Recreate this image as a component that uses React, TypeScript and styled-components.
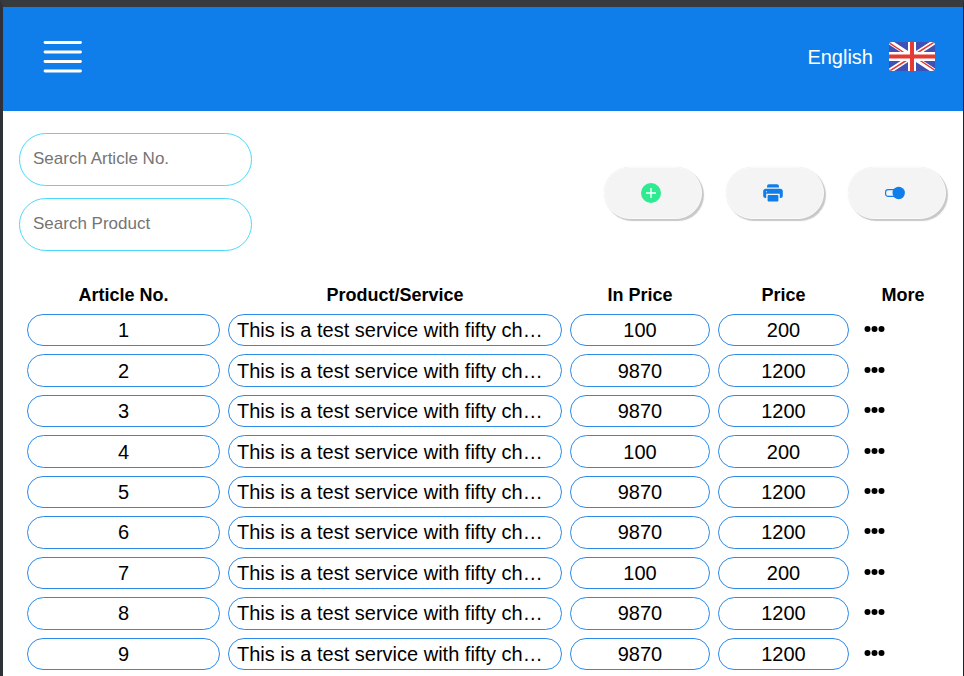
import React, { useState } from "react";
import styled, { createGlobalStyle } from "styled-components";

const GlobalStyle = createGlobalStyle`
  * { box-sizing: border-box; }
  body {
    margin: 0;
    background: #fff;
    font-family: "Liberation Sans", Arial, sans-serif;
    color: #000;
  }
`;

const Page = styled.div`
  min-height: 100vh;
  border: solid #373b3e;
  border-width: 7px 1px 0 3px;
  border-right-color: #1c2227;
  border-left-color: #2e3238;
`;

const Header = styled.header`
  display: flex;
  align-items: center;
  justify-content: space-between;
  height: 104px;
  padding: 0 27px 4px 40px;
  background: #107eea;
`;

const PlainButton = styled.button`
  display: flex;
  align-items: center;
  padding: 0;
  border: 0;
  background: none;
  color: inherit;
  font: inherit;
  cursor: pointer;
`;

const Language = styled(PlainButton)`
  gap: 15px;
  color: #fff;
  font-size: 20px;
`;

const Toolbar = styled.section`
  display: flex;
  align-items: center;
  justify-content: space-between;
  padding: 22px 17px 0 16px;
`;

const Filters = styled.div`
  display: grid;
  gap: 12px;
`;

const SearchInput = styled.input`
  width: 233px;
  height: 53px;
  padding: 0 14px 2px 13px;
  border: 1px solid #4dd8fb;
  border-radius: 27px;
  outline: 0;
  background: #fff;
  font: 17px "Liberation Sans", Arial, sans-serif;
  &::placeholder { color: #757575; }
`;

const Actions = styled.div`
  display: flex;
  gap: 24px;
  padding-top: 2px;
`;

const ActionButton = styled.button`
  display: flex;
  align-items: center;
  justify-content: center;
  width: 98px;
  height: 52px;
  padding: 0 4px 0 0;
  border: 1px solid #fafafa;
  border-radius: 26px;
  background: #f4f4f4;
  box-shadow: 2px 2px 1px #c8c8c8, 0 0 1px #ddd;
  cursor: pointer;
`;

const TableArea = styled.main`
  padding: 25px 6px 0 16px;
`;

const Table = styled.table`
  width: 100%;
  height: 402px;
  table-layout: fixed;
  border-collapse: separate;
  border-spacing: 8px;
`;

const Column = styled.col<{ $width?: number }>`
  width: ${({ $width }) => ($width ? `${$width}px` : "auto")};
`;

const HeadCell = styled.th`
  height: 22px;
  padding: 0;
  font-size: 18px;
  line-height: 22px;
`;

const Cell = styled.td<{ $align?: string }>`
  padding: 0 8px;
  border: 1px solid #2b8aea;
  border-radius: 17px;
  font-size: 20px;
  line-height: 24px;
  text-align: ${({ $align }) => $align ?? "center"};
  white-space: nowrap;
`;

const MoreCell = styled.td`
  padding: 0 7px 2px;
`;

const PRODUCT_LIMIT = 36;

const shorten = (text: string) =>
  text.length > PRODUCT_LIMIT ? `${text.slice(0, PRODUCT_LIMIT)}…` : text;

const rows = Array.from({ length: 9 }, (_, i) => ({
  article: i + 1,
  product: "This is a test service with fifty characters in it",
  inPrice: i % 3 === 0 ? 100 : 9870,
  price: i % 3 === 0 ? 200 : 1200,
}));

const MenuIcon = () => (
  <svg width="40" height="34" viewBox="0 0 40 34" stroke="#fff" strokeWidth="2.8" strokeLinecap="round" aria-hidden="true">
    <path d="M2 2.500H37.500M2 12H37.500M2 21.500H37.500M2 31H37.500" />
  </svg>
);

const FlagIcon = () => (
  <svg width="48" height="32" viewBox="0 0 48 32" aria-hidden="true">
    <defs>
      <clipPath id="flag"><rect x="1" y="1" width="46" height="29" rx="3" /></clipPath>
    </defs>
    <g clipPath="url(#flag)">
      <path fill="#3f51b5" d="M0 0H48V32H0z" />
      <path stroke="#fff" strokeWidth="5" d="M0 0L48 31M48 0L0 31" />
      <path stroke="#e53935" strokeWidth="1.500" d="M0 1L18 13M29 12L48 0M30 18L48 30M19 19L0 31" />
      <path fill="#fff" d="M20 0H28V32H20zM0 11H48V20H0z" />
      <path fill="#e53935" d="M22 0H26V32H22zM0 13.500H48V17.500H0z" />
    </g>
  </svg>
);

const AddIcon = () => (
  <svg width="20" height="20" viewBox="0 0 20 20" aria-hidden="true">
    <circle cx="10" cy="10" r="10" fill="#2eea91" />
    <path d="M10 5V15M5 10H15" stroke="#fff" strokeWidth="1.300" />
  </svg>
);

const PrintIcon = () => (
  <svg width="20" height="20" viewBox="0 0 20 20" fill="#107eea" aria-hidden="true">
    <path d="M4 4.500V3.500Q4 1.200 6 1.200H14Q16 1.200 16 3.500V4.500z" />
    <path fillRule="evenodd" d="M3 5.800H17Q19.800 5.800 19.800 8.500V13Q19.800 15 17.500 15H16.800V10.800H3.200V15H2.500Q.200 15 .200 13V8.500Q.200 5.800 3 5.800zM3 8.200V9.200H4V8.200z" />
    <rect x="4.600" y="12" width="10.800" height="6.500" rx="1" />
  </svg>
);

const ToggleIcon = () => (
  <svg width="20" height="20" viewBox="0 0 20 20" aria-hidden="true">
    <rect x=".6" y="6.600" width="13" height="6.800" rx="2.500" fill="none" stroke="#107eea" strokeWidth="1.200" />
    <circle cx="13.700" cy="10" r="6.200" fill="#107eea" />
  </svg>
);

const DotsIcon = () => (
  <svg width="21" height="8" viewBox="0 0 21 8" aria-hidden="true">
    <circle cx="3.500" cy="4" r="3" />
    <circle cx="10.500" cy="4" r="3" />
    <circle cx="17.500" cy="4" r="3" />
  </svg>
);

export default function App() {
  const [article, setArticle] = useState("");
  const [product, setProduct] = useState("");
  const visible = rows.filter(
    (row) =>
      String(row.article).includes(article) &&
      row.product.toLowerCase().includes(product.toLowerCase())
  );

  return (
    <>
      <GlobalStyle />
      <Page>
        <Header>
          <PlainButton aria-label="Menu"><MenuIcon /></PlainButton>
          <Language>English<FlagIcon /></Language>
        </Header>
        <Toolbar>
          <Filters>
            <SearchInput aria-label="Search Article No." placeholder="Search Article No." value={article} onChange={(e) => setArticle(e.target.value)} />
            <SearchInput aria-label="Search Product" placeholder="Search Product" value={product} onChange={(e) => setProduct(e.target.value)} />
          </Filters>
          <Actions>
            <ActionButton aria-label="Add product"><AddIcon /></ActionButton>
            <ActionButton aria-label="Print"><PrintIcon /></ActionButton>
            <ActionButton aria-label="Toggle view"><ToggleIcon /></ActionButton>
          </Actions>
        </Toolbar>
        <TableArea>
          <Table>
            <colgroup>
              <Column $width={193} />
              <Column />
              <Column $width={140} />
              <Column $width={131} />
              <Column $width={92} />
            </colgroup>
            <thead>
              <tr>
                <HeadCell scope="col">Article No.</HeadCell>
                <HeadCell scope="col">Product/Service</HeadCell>
                <HeadCell scope="col">In Price</HeadCell>
                <HeadCell scope="col">Price</HeadCell>
                <HeadCell scope="col">More</HeadCell>
              </tr>
            </thead>
            <tbody>
              {visible.map((row) => (
                <tr key={row.article}>
                  <Cell>{row.article}</Cell>
                  <Cell $align="left">{shorten(row.product)}</Cell>
                  <Cell>{row.inPrice}</Cell>
                  <Cell>{row.price}</Cell>
                  <MoreCell>
                    <PlainButton aria-label={`More options for article ${row.article}`}><DotsIcon /></PlainButton>
                  </MoreCell>
                </tr>
              ))}
            </tbody>
          </Table>
        </TableArea>
      </Page>
    </>
  );
}
